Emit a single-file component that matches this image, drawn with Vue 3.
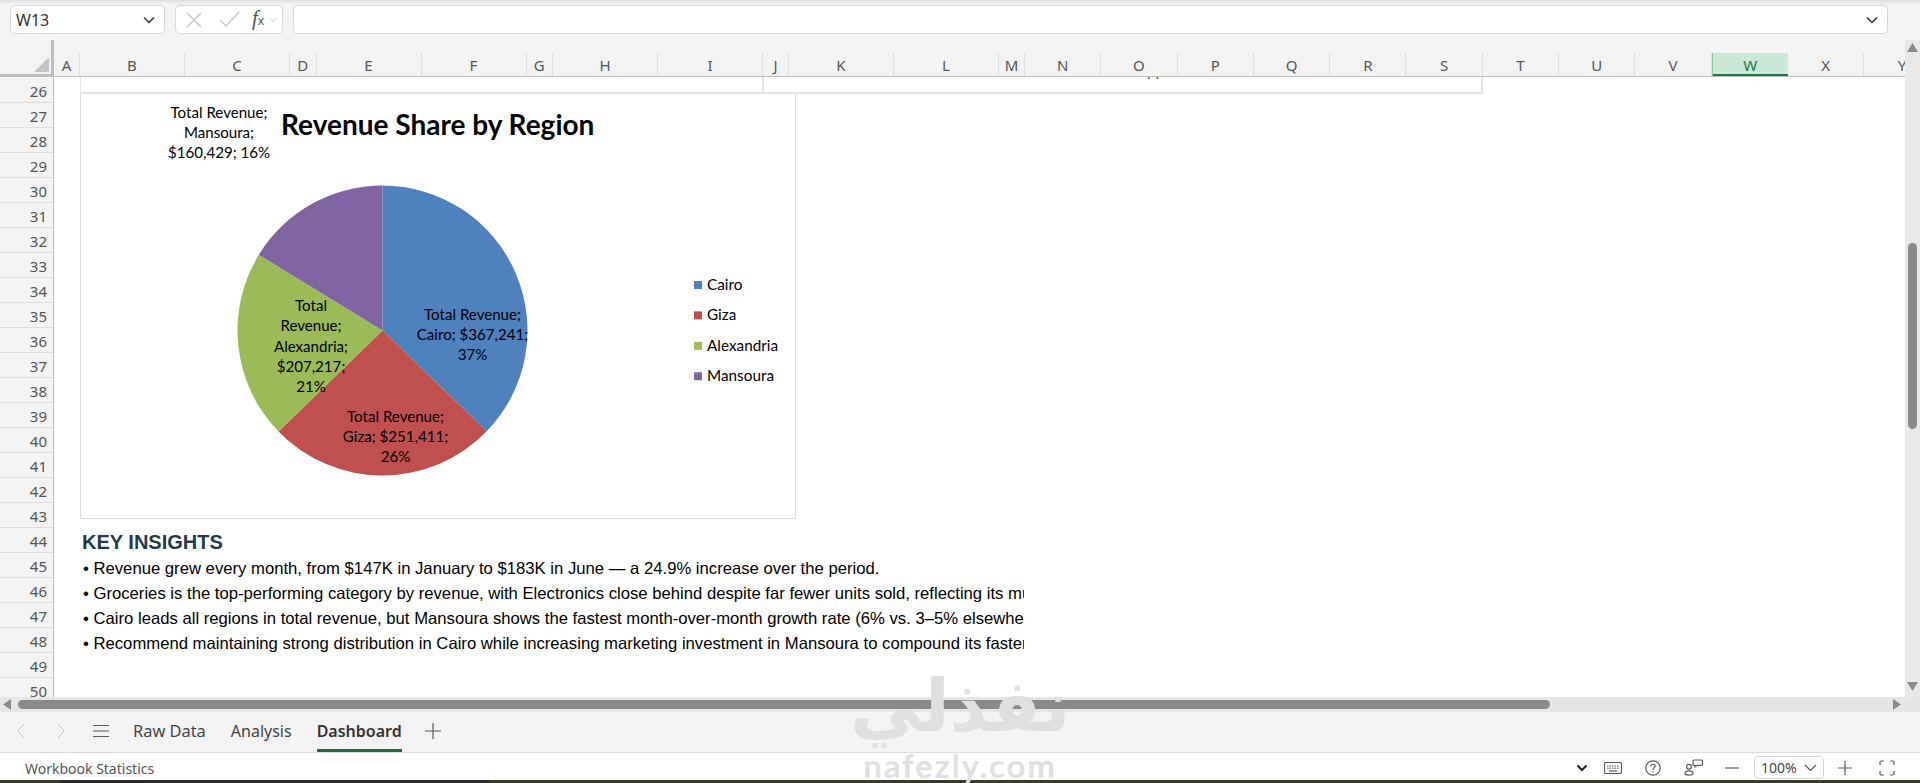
<template>
  <div class="excel">
    <!-- formula bar -->
    <div class="formula-row">
      <div class="name-box">
        <span>W13</span>
        <svg width="14" height="10" viewBox="0 0 14 10"><path d="M2 2.5 7 7.5 12 2.5" class="line dark" /></svg>
      </div>
      <div class="fx-box">
        <svg width="16" height="16" viewBox="0 0 16 16"><path d="M1 1 15 15M15 1 1 15" class="line pale" /></svg>
        <svg class="fx-check" width="21" height="17" viewBox="0 0 21 17"><path d="M1 9 7 15 20 1" class="line pale" /></svg>
        <span class="fx-label">f<small>x</small></span>
        <svg class="fx-more" width="8" height="6" viewBox="0 0 8 6"><path d="M1 1.5 4 4.5 7 1.5" class="line pale thin" /></svg>
      </div>
      <div class="formula-input">
        <svg width="14" height="10" viewBox="0 0 14 10"><path d="M2 2.5 7 7.5 12 2.5" class="line dark" /></svg>
      </div>
    </div>

    <div class="grid-area">
      <div class="grid-main">
        <div class="col-row">
          <div class="corner">
            <svg width="15" height="15" viewBox="0 0 15 15"><path d="M0 15 15 0V15Z" fill="#c4c4c4" /></svg>
          </div>
          <div class="cols">
            <div
              v-for="col in columns"
              :key="col.name"
              class="col"
              :class="{ selected: col.name === 'W' }"
              :style="{ width: col.width + 'px' }"
            >
              {{ col.name }}
            </div>
          </div>
        </div>

        <div class="body">
          <div class="row-heads">
            <div v-for="n in rows" :key="n" class="row-head">{{ n }}</div>
          </div>

          <div class="sheet">
            <div class="upper-box">
              <div class="upper-left"></div>
              <span class="cut-text">pp</span>
            </div>

            <div class="chart">
              <svg width="715" height="424" viewBox="0 0 715 424">
                <path v-for="s in slices" :key="s.name" :d="s.path" :fill="s.color" />

                <text class="chart-title" x="200" y="41">Revenue Share by Region</text>

                <g v-for="label in labels" :key="label.x" class="chart-label">
                  <text v-for="(line, i) in label.lines" :key="i" :x="label.x" :y="label.y + i * label.step">{{ line }}</text>
                </g>

                <g v-for="(s, i) in slices" :key="s.name">
                  <rect x="613" :y="187 + i * 30.4" width="8" height="8" :fill="s.color" />
                  <text class="legend-text" x="626" :y="196 + i * 30.4">{{ s.name }}</text>
                </g>
              </svg>
            </div>

            <div class="insights">
              <h3>KEY INSIGHTS</h3>
              <p v-for="line in insights" :key="line">{{ line }}</p>
            </div>
          </div>
        </div>
      </div>

      <div class="vscroll">
        <svg width="11" height="9" viewBox="0 0 11 9"><path d="M5.5 0 11 9H0Z" fill="#8a8a8a" /></svg>
        <div class="vthumb"></div>
        <svg class="down" width="11" height="9" viewBox="0 0 11 9"><path d="M0 0H11L5.5 9Z" fill="#8a8a8a" /></svg>
      </div>
    </div>

    <div class="hscroll">
      <svg width="8" height="11" viewBox="0 0 8 11"><path d="M8 0V11L0 5.5Z" fill="#8a8a8a" /></svg>
      <div class="hthumb"></div>
      <svg class="right-arrow" width="8" height="11" viewBox="0 0 8 11"><path d="M0 0V11L8 5.5Z" fill="#8a8a8a" /></svg>
    </div>

    <div class="tabs">
      <svg class="nav" width="10" height="16" viewBox="0 0 10 16"><path d="M8 1 2 8 8 15" class="line pale thin" /></svg>
      <svg class="nav next" width="10" height="16" viewBox="0 0 10 16"><path d="M2 1 8 8 2 15" class="line pale thin" /></svg>
      <svg class="menu" width="16" height="14" viewBox="0 0 16 14"><path d="M0 1.5H16M0 7H16M0 12.5H16" class="line mid" /></svg>
      <span class="tab first">Raw Data</span>
      <span class="tab">Analysis</span>
      <span class="tab active">Dashboard</span>
      <svg class="add" width="16" height="16" viewBox="0 0 16 16"><path d="M8 0V16M0 8H16" class="line mid" /></svg>
    </div>

    <div class="status">
      <span class="stat-text">Workbook Statistics</span>
      <div class="status-right">
        <svg width="12" height="8" viewBox="0 0 12 8"><path d="M1.5 1.5 6 6 10.5 1.5" class="line black" /></svg>
        <svg class="i-key" width="18" height="12" viewBox="0 0 18 12">
          <rect x=".5" y=".5" width="17" height="11" rx="1.5" class="line mid" />
          <path d="M3 4H15M3 6.2H15" class="line mid dots" />
          <path d="M5 9H13" class="line mid" />
        </svg>
        <svg class="i-help" width="16" height="16" viewBox="0 0 16 16">
          <circle cx="8" cy="8" r="7.2" class="line mid" />
          <path d="M5.8 6.2C5.8 3.6 10.2 3.6 10.2 6.1 10.2 7.8 8 7.8 8 9.8M8 11.2V12.4" class="line mid" />
        </svg>
        <svg class="i-feed" width="19" height="17" viewBox="0 0 19 17">
          <circle cx="5" cy="7.8" r="2.4" class="line mid" />
          <path d="M1 14.5C1 11 9 11 9 14.5 9 16.6 1 16.6 1 14.5Z" class="line mid" />
          <path d="M10 1H17.4C18 1 18.5 1.4 18.5 2V5.4C18.5 6 18 6.4 17.4 6.4H13L11 8V6.4H10C9.4 6.4 9 6 9 5.4V2C9 1.4 9.4 1 10 1Z" class="line mid" />
        </svg>
        <svg class="i-minus" width="14" height="2" viewBox="0 0 14 2"><path d="M0 1H14" class="line mid" /></svg>
        <div class="zoom-box">
          <span>100%</span>
          <svg width="13" height="8" viewBox="0 0 13 8"><path d="M1 1 6.5 6.5 12 1" class="line mid" /></svg>
        </div>
        <svg class="i-plus" width="14" height="14" viewBox="0 0 14 14"><path d="M7 0V14M0 7H14" class="line mid" /></svg>
        <svg class="i-full" width="16" height="16" viewBox="0 0 16 16"><path d="M1 5V2.5C1 1.6 1.6 1 2.5 1H5M11 1H13.5C14.4 1 15 1.6 15 2.5V5M15 11V13.5C15 14.4 14.4 15 13.5 15H11M5 15H2.5C1.6 15 1 14.4 1 13.5V11" class="line mid" /></svg>
      </div>
    </div>

    <div class="taskbar"><div class="taskbar-inner"></div></div>

    <!-- site watermark on top of everything -->
    <div class="watermark">
      <span class="wm-ar">نفذلي</span>
      <span class="wm-en">nafezly.com</span>
    </div>
  </div>
</template>

<script setup>
const widths = {
  A: 26, B: 105, C: 105, D: 26.5, E: 105, F: 105, G: 26.5, H: 105, I: 105,
  J: 26, K: 105, L: 105, M: 26,
};
const columns = "ABCDEFGHIJKLMNOPQRSTUVWXY".split("").map((name) => ({
  name,
  width: widths[name] || 76.3,
}));

const rows = [];
for (let n = 26; n <= 50; n++) rows.push(n);

const regions = [
  { name: "Cairo", value: 367241, color: "#4f81bd" },
  { name: "Giza", value: 251411, color: "#c0504d" },
  { name: "Alexandria", value: 207217, color: "#9bbb59" },
  { name: "Mansoura", value: 160429, color: "#8064a2" },
];

const total = regions.reduce((sum, r) => sum + r.value, 0);
const cx = 301.5;
const cy = 236.5;
const radius = 145;

let angle = 0;
const slices = regions.map((r) => {
  const start = angle;
  angle += (r.value / total) * Math.PI * 2;
  const x1 = cx + radius * Math.sin(start);
  const y1 = cy - radius * Math.cos(start);
  const x2 = cx + radius * Math.sin(angle);
  const y2 = cy - radius * Math.cos(angle);
  const big = angle - start > Math.PI ? 1 : 0;
  return {
    ...r,
    path: `M${cx} ${cy}L${x1} ${y1}A${radius} ${radius} 0 ${big} 1 ${x2} ${y2}Z`,
  };
});

const labels = [
  { x: 138, y: 24, step: 20, lines: ["Total Revenue;", "Mansoura;", "$160,429; 16%"] },
  { x: 391.5, y: 226, step: 20, lines: ["Total Revenue;", "Cairo; $367,241;", "37%"] },
  { x: 314.5, y: 328, step: 20, lines: ["Total Revenue;", "Giza; $251,411;", "26%"] },
  { x: 230, y: 217, step: 20.3, lines: ["Total", "Revenue;", "Alexandria;", "$207,217;", "21%"] },
];

const insights = [
  "• Revenue grew every month, from $147K in January to $183K in June — a 24.9% increase over the period.",
  "• Groceries is the top-performing category by revenue, with Electronics close behind despite far fewer units sold, reflecting its much higher unit price.",
  "• Cairo leads all regions in total revenue, but Mansoura shows the fastest month-over-month growth rate (6% vs. 3–5% elsewhere).",
  "• Recommend maintaining strong distribution in Cairo while increasing marketing investment in Mansoura to compound its faster growth.",
];
</script>

<style>
html,
body {
  margin: 0;
  overflow: hidden;
  background: #fff;
}
</style>

<style scoped>
.excel {
  position: relative;
  display: flex;
  flex-direction: column;
  height: 100vh;
  overflow: hidden;
  background: #f3f3f3;
  font-family: "Noto Sans", sans-serif;
  color: #444;
}
.line {
  fill: none;
  stroke-width: 1.5;
}
.line.dark { stroke: #333; }
.line.black { stroke: #222; stroke-width: 2; }
.line.pale { stroke: #c6c6c6; }
.line.thin { stroke-width: 1; }
.line.mid { stroke: #5a5a5a; stroke-width: 1.2; }
.line.dots { stroke-dasharray: 1.5 1; stroke-width: 1; }

.formula-row {
  display: flex;
  flex: none;
  height: 34px;
  padding: 5px 32px 0 10px;
  box-sizing: border-box;
  gap: 10px;
  background: linear-gradient(#dcdcdc, #f3f3f3 4px);
}
.name-box,
.fx-box,
.formula-input {
  display: flex;
  align-items: center;
  box-sizing: border-box;
  height: 29px;
  background: #fff;
  border: 1px solid #d6d6d6;
  border-radius: 5px;
}
.name-box {
  width: 155px;
  padding: 0 8px 0 5px;
  justify-content: space-between;
  font-size: 16px;
  color: #333;
}
.fx-box {
  width: 108px;
  padding: 0 0 0 10px;
}
.fx-check {
  margin-left: 17px;
}
.fx-label {
  margin-left: 12px;
  font-family: "Liberation Serif", serif;
  font-style: italic;
  font-size: 21px;
  line-height: 24px;
  color: #555;
}
.fx-label small {
  font-family: "Liberation Sans", sans-serif;
  font-style: normal;
  font-size: 13px;
}
.fx-more {
  margin-left: 5px;
}
.formula-input {
  flex: 1;
  justify-content: flex-end;
  padding-right: 8px;
  border-radius: 5px;
}

.grid-area {
  display: flex;
  flex: none;
  height: 663px;
}
.grid-main {
  flex: 1;
  min-width: 0;
  display: flex;
  flex-direction: column;
  padding-top: 6px;
  overflow: hidden;
}
.col-row {
  display: flex;
  flex: none;
  align-items: flex-end;
  height: 37px;
}
.corner {
  flex: none;
  display: flex;
  align-items: flex-end;
  justify-content: flex-end;
  box-sizing: border-box;
  width: 54px;
  height: 37px;
  padding: 0 2px 2px 0;
  border-right: 3px solid #bdbdbd;
  border-bottom: 3px solid #bdbdbd;
}
.cols {
  display: flex;
  flex: 1;
  height: 24px;
  border-bottom: 1px solid #bdbdbd;
  box-sizing: border-box;
  overflow: hidden;
}
.col {
  flex: none;
  box-sizing: border-box;
  border-right: 1px solid #dedede;
  font-size: 15px;
  line-height: 25px;
  text-align: center;
  color: #555;
}
.col.selected {
  background: #c9e8d6;
  color: #1a7a43;
  border-right: none;
  border-left: 1px solid #8cc4a4;
  box-shadow: inset 0 -2px 0 #1a7a43;
}

.body {
  display: flex;
  flex: 1;
  min-height: 0;
}
.row-heads {
  flex: none;
  width: 54px;
  box-sizing: border-box;
  padding-top: 1px;
  border-right: 1px solid #bdbdbd;
  overflow: hidden;
}
.row-head {
  box-sizing: border-box;
  height: 25.03px;
  border-bottom: 1px solid #dedede;
  padding-right: 6px;
  font-size: 15px;
  line-height: 26px;
  text-align: right;
  color: #555;
}
.sheet {
  flex: 1;
  min-width: 0;
  background: #fff;
  padding-left: 26px;
  overflow: hidden;
}
.upper-box {
  position: relative;
  display: flex;
  box-sizing: border-box;
  width: 1403px;
  height: 17px;
  border-left: 1px solid #e6e6e6;
  border-right: 2px solid #e3e3e3;
  border-bottom: 2px solid #e3e3e3;
  overflow: hidden;
}
.upper-left {
  width: 681px;
  border-right: 2px solid #e3e3e3;
}
.cut-text {
  position: absolute;
  left: 1066px;
  top: -17px;
  font-size: 14px;
  color: #333;
}
.chart {
  box-sizing: border-box;
  width: 716px;
  height: 425px;
  background: #fff;
  border-left: 1px solid #dcdcdc;
  border-right: 1px solid #dcdcdc;
  border-bottom: 1.5px solid #dcdcdc;
}
.chart svg {
  display: block;
}
.chart-title {
  font-family: Lato, sans-serif;
  font-size: 28px;
  font-weight: 700;
  fill: #000;
}
.chart-label text {
  font-family: Lato, sans-serif;
  font-size: 15.1px;
  text-anchor: middle;
  fill: #000;
}
.legend-text {
  font-family: Lato, sans-serif;
  font-size: 15.3px;
  fill: #000;
}
.insights {
  width: 944px;
  margin-top: 9px;
  padding-left: 2px;
  box-sizing: border-box;
  overflow: hidden;
  font-family: "Liberation Sans", sans-serif;
  white-space: nowrap;
}
.insights h3 {
  margin: 0;
  height: 27.5px;
  font-size: 20px;
  line-height: 28px;
  font-weight: 700;
  color: #1f3a4d;
}
.insights p {
  margin: 0 0 0 1px;
  height: 25px;
  font-size: 16.68px;
  line-height: 25px;
  color: #000;
}

.vscroll {
  flex: none;
  display: flex;
  flex-direction: column;
  align-items: center;
  box-sizing: border-box;
  width: 15px;
  margin-top: 6px;
  padding: 3px 0 6px;
  background: #e9e9e9;
}
.vthumb {
  width: 9px;
  height: 186px;
  margin-top: 191px;
  border-radius: 5px;
  background: #8a8a8a;
}
.down {
  margin-top: auto;
}

.hscroll {
  flex: none;
  display: flex;
  align-items: center;
  box-sizing: border-box;
  height: 15px;
  padding: 0 19px 0 3px;
  background: #e6e6e6;
}
.hthumb {
  width: 1532px;
  height: 9px;
  margin-left: 7px;
  border-radius: 5px;
  background: #8a8a8a;
}
.right-arrow {
  margin-left: auto;
}

.tabs {
  flex: none;
  display: flex;
  align-items: center;
  box-sizing: border-box;
  height: 41px;
  padding-left: 16px;
  border-bottom: 1px solid #dcdcdc;
  background: #f3f3f3;
}
.tabs svg {
  margin-bottom: 2px;
}
.nav.next {
  margin-left: 30px;
}
.menu {
  margin-left: 27px;
}
.tab {
  align-self: stretch;
  margin-left: 25px;
  padding-bottom: 2px;
  font-size: 16px;
  line-height: 38px;
  color: #444;
}
.tab.first {
  margin-left: 24px;
  font-size: 16.4px;
}
.tab.active {
  font-weight: 600;
  color: #333;
  box-shadow: inset 0 -3px 0 #1f6e43;
}
.add {
  margin-left: 23px;
}

.status {
  flex: none;
  display: flex;
  align-items: center;
  justify-content: space-between;
  box-sizing: border-box;
  height: 27px;
  padding: 2px 25px 0 25px;
  background: #fff;
}
.stat-text {
  padding-top: 2px;
  font-size: 14px;
  color: #555;
}
.status-right {
  display: flex;
  align-items: center;
}
.i-key { margin-left: 16px; }
.i-help { margin-left: 23px; }
.i-feed { margin-left: 23px; }
.i-minus { margin-left: 22px; }
.i-plus { margin-left: 14px; }
.i-full { margin-left: 27px; }
.zoom-box {
  display: flex;
  align-items: center;
  justify-content: space-between;
  box-sizing: border-box;
  width: 70px;
  height: 23px;
  margin-left: 15px;
  padding: 0 6px;
  border: 1px solid #d6d6d6;
  border-radius: 4px;
  font-size: 14px;
  color: #444;
}

.taskbar {
  flex: none;
  height: 3px;
  background: #3a3a2a;
  padding-left: 60px;
}
.taskbar-inner {
  width: 429px;
  height: 3px;
  background: #2b2b2b;
}

.watermark {
  position: absolute;
  left: 850px;
  top: 661px;
  width: 220px;
  display: flex;
  flex-direction: column;
  align-items: center;
  pointer-events: none;
  color: #e0e0e0;
}
.wm-ar {
  font-family: "DejaVu Sans", sans-serif;
  font-size: 72px;
  font-weight: 700;
  line-height: 90px;
}
.wm-en {
  margin-top: -4px;
  font-family: Lato, sans-serif;
  font-size: 33px;
  font-weight: 700;
  letter-spacing: 1.8px;
  line-height: 36px;
}
</style>
